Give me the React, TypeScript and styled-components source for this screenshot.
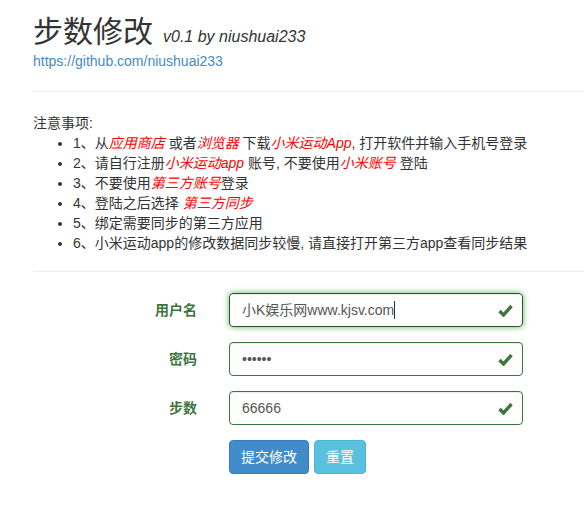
import React from 'react'
import styled, { createGlobalStyle } from 'styled-components'

const GlobalStyle = createGlobalStyle`
  html, body {
    margin: 0;
    padding: 0;
    background: #fff;
  }
  body {
    font-family: 'Liberation Sans', 'Noto Sans CJK SC', sans-serif;
    font-size: 14px;
    line-height: 20px;
    color: #333;
  }
`

const Page = styled.div`
  padding: 17px 0 0 33px;
  overflow: hidden;
`

const Title = styled.h1`
  margin: 0;
  font-size: 30px;
  line-height: 30px;
  font-weight: normal;
  color: #333;
  display: flex;
  align-items: baseline;
  gap: 10px;
`

const Version = styled.small`
  font-size: 16px;
  line-height: 20px;
  font-style: italic;
  font-weight: normal;
  color: #333;
`

const RepoLink = styled.a`
  display: block;
  margin-top: 4px;
  color: #428bca;
  text-decoration: none;
`

const Rule = styled.hr<{ gap: number }>`
  margin: ${p => p.gap}px 0 0;
  border: 0;
  border-top: 1px solid #eee;
`

const NoteTitle = styled.div`
  margin-top: 21px;
`

const NoteList = styled.ul`
  margin: 0;
  padding-left: 40px;
  list-style: disc;
`

const Hot = styled.em`
  color: #f00;
  font-style: italic;
`

const Form = styled.form`
  display: grid;
  grid-template-columns: 164px 294px;
  column-gap: 32px;
  row-gap: 15px;
  margin-top: 21px;
`

const Label = styled.label`
  text-align: right;
  font-weight: bold;
  color: #3c763d;
  padding-top: 7px;
`

const Field = styled.div<{ focused?: boolean }>`
  position: relative;
  box-sizing: border-box;
  height: 34px;
  padding: 6px 34px 6px 12px;
  border: 1px solid ${p => (p.focused ? '#2b542c' : '#3c763d')};
  border-radius: 4px;
  box-shadow: ${p =>
    p.focused
      ? 'inset 0 1px 1px rgba(0,0,0,.075), 0 0 6px #67b168'
      : 'inset 0 1px 1px rgba(0,0,0,.075)'};
  color: #555;
  white-space: nowrap;
`

const Caret = styled.span`
  display: inline-block;
  width: 1px;
  height: 18px;
  background: #333;
  vertical-align: -4px;
`

const Feedback = styled.span`
  position: absolute;
  top: 0;
  right: 0;
  width: 34px;
  height: 32px;
  display: flex;
  align-items: center;
  justify-content: center;
`

const Actions = styled.div`
  grid-column: 2;
  display: flex;
  gap: 5px;
`

const Button = styled.button<{ tone: 'primary' | 'info' }>`
  font-family: inherit;
  font-size: 14px;
  line-height: 20px;
  padding: 6px 11px;
  border-radius: 4px;
  color: #fff;
  cursor: pointer;
  background: ${p => (p.tone === 'primary' ? '#428bca' : '#5bc0de')};
  border: 1px solid ${p => (p.tone === 'primary' ? '#357ebd' : '#46b8da')};
`

const Check = () => (
  <svg width="15" height="13" viewBox="0 0 15 13">
    <path d="M1.5 7 L5.5 11 L13.5 2" fill="none" stroke="#3c763d" strokeWidth="3.4" />
  </svg>
)

const fields = [
  { label: '用户名', value: '小K娱乐网www.kjsv.com', focused: true },
  { label: '密码', value: '••••••' },
  { label: '步数', value: '66666' },
]

export default function App() {
  return (
    <Page>
      <GlobalStyle />
      <Title>
        步数修改 <Version>v0.1 by niushuai233</Version>
      </Title>
      <RepoLink href="#">https://github.com/niushuai233</RepoLink>
      <Rule gap={20} />

      <NoteTitle>注意事项:</NoteTitle>
      <NoteList>
        <li>1、从<Hot>应用商店</Hot> 或者<Hot>浏览器</Hot> 下载<Hot>小米运动App</Hot>, 打开软件并输入手机号登录</li>
        <li>2、请自行注册<Hot>小米运动app</Hot> 账号, 不要使用<Hot>小米账号</Hot> 登陆</li>
        <li>3、不要使用<Hot>第三方账号</Hot>登录</li>
        <li>4、登陆之后选择 <Hot>第三方同步</Hot></li>
        <li>5、绑定需要同步的第三方应用</li>
        <li>6、小米运动app的修改数据同步较慢, 请直接打开第三方app查看同步结果</li>
      </NoteList>
      <Rule gap={18} />

      <Form onSubmit={e => e.preventDefault()}>
        {fields.map(f => (
          <React.Fragment key={f.label}>
            <Label>{f.label}</Label>
            <Field focused={f.focused}>
              {f.value}
              {f.focused && <Caret />}
              <Feedback>
                <Check />
              </Feedback>
            </Field>
          </React.Fragment>
        ))}
        <Actions>
          <Button tone="primary" type="submit">提交修改</Button>
          <Button tone="info" type="reset">重置</Button>
        </Actions>
      </Form>
    </Page>
  )
}
